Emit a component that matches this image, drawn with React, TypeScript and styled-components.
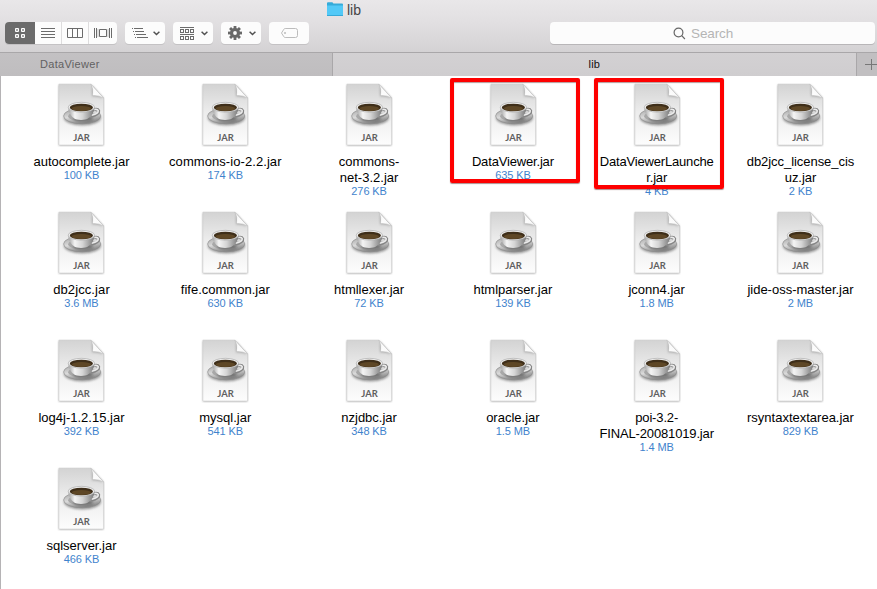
import React from "react";
import styled, { createGlobalStyle } from "styled-components";

const GlobalStyle = createGlobalStyle`
  * { box-sizing: border-box; }
  body { margin: 0; background: #fff; overflow: hidden; font-family: "Liberation Sans", Arial, sans-serif; }
  svg { display: block; flex: none; }
`;

const Window = styled.div`
  width: 877px;
  height: 589px;
  display: flex;
  flex-direction: column;
  overflow: hidden;
  background: #fff;
`;

const Header = styled.header`
  flex: none;
  height: 53px;
  border-bottom: 1px solid #a9a7a9;
  background: linear-gradient(#e9e7e9, #e3e1e3 35%, #d4d2d4);
`;

const Title = styled.div`
  height: 22px;
  padding: 1px 0 0 327px;
  display: flex;
  align-items: flex-start;
  gap: 4px;
  font-size: 14px;
  line-height: 18px;
  color: #464446;
`;

const Toolbar = styled.div`
  display: flex;
  gap: 8px;
  padding-left: 5px;
`;

const Group = styled.div`
  display: flex;
  width: 112px;
  height: 22px;
  border-radius: 4px;
  overflow: hidden;
  background: #fcfcfc;
  box-shadow: 0 1px 0 #c4c2c4;
`;

const Segment = styled.div<{ $width: number; $active?: boolean }>`
  width: ${(p) => p.$width}px;
  display: flex;
  align-items: center;
  justify-content: center;
  background: ${(p) => (p.$active ? "#6b6b6b" : "transparent")};
  border-right: ${(p) => (p.$active ? "0" : "1px solid #dddcdd")};
  &:last-child { border-right: 0; }
`;

const ToolButton = styled.div`
  width: 40px;
  height: 22px;
  border-radius: 4px;
  background: #fcfcfc;
  box-shadow: 0 1px 0 #c4c2c4;
`;

const SearchField = styled.div`
  width: 325px;
  height: 22px;
  margin: 0 2px 0 auto;
  border-radius: 4px;
  background: #fcfcfc;
  box-shadow: 0 1px 0 #b8b6b8;
  display: flex;
  align-items: center;
  padding-left: 123px;
  gap: 5px;
  font-size: 13.5px;
  letter-spacing: -0.1px;
  color: #b5b5b5;
`;

const TabBar = styled.nav`
  flex: none;
  height: 23px;
  display: grid;
  grid-template-columns: 333px 524px 20px;
  border-bottom: 1px solid #a9a7a9;
`;

const Tab = styled.div<{ $active?: boolean }>`
  border-right: 1px solid #a9a7a9;
  padding-left: ${(p) => (p.$active ? 255.5 : 40)}px;
  font-size: 11px;
  line-height: 23px;
  letter-spacing: ${(p) => (p.$active ? 0.2 : 0.3)}px;
  color: ${(p) => (p.$active ? "#111" : "#626162")};
  background: ${(p) => (p.$active ? "linear-gradient(#d3d1d3, #cfcdcf)" : "linear-gradient(#c3c1c3, #bfbdbf)")};
`;

const NewTab = styled.div`
  background: #c1bfc1;
  padding: 5px 0 0 8px;
  overflow: hidden;
`;

const Files = styled.main`
  flex: 1;
  min-height: 0;
  border-left: 1px solid #b5b3b5;
  padding: 2px 0 0 8.6px;
  display: grid;
  grid-template-columns: repeat(6, 143.8px);
  grid-auto-rows: 128px;
`;

const File = styled.div`
  position: relative;
  display: flex;
  flex-direction: column;
  align-items: center;
  padding-top: 5px;
`;

const FileName = styled.div<{ $tracking: number }>`
  margin-top: 7px;
  font-size: 13px;
  line-height: 16px;
  text-align: center;
  white-space: pre;
  letter-spacing: ${(p) => p.$tracking}px;
  color: #000;
`;

const FileSize = styled.div`
  font-size: 11px;
  line-height: 12px;
  margin-top: -1px;
  letter-spacing: -0.1px;
  color: #3f83cd;
`;

const Highlight = styled.div<{ $left: number; $height: number }>`
  position: absolute;
  left: ${(p) => p.$left}px;
  top: 0;
  width: 130px;
  height: ${(p) => p.$height}px;
  border: 4px solid #fe0000;
  border-radius: 2px;
  box-shadow: 0 1px 1px rgba(70, 0, 0, 0.45), inset 0 1px 1px rgba(70, 0, 0, 0.4);
`;

const Folder = () => (
  <svg width="16" height="15" viewBox="0 0 16 15">
    <path d="M0 2.2Q0 1.2 1 1.2h4.4l1 1.4H15q1 0 1 1V6H0z" fill="#35abd9" />
    <path d="M0 4.4h16V14q0 1-.8 1H.8Q0 15 0 14z" fill="#52c9f7" />
    <path d="M0 14.5h16" stroke="#36a9d8" />
  </svg>
);

const GridIcon = () => (
  <svg width="10" height="10" viewBox="0 0 10 10" fill="none" stroke="#fff" strokeWidth="1.2">
    {[0.6, 6.6].map((y) => [0.6, 6.6].map((x) => <rect key={`${x}${y}`} x={x} y={y} width="2.8" height="2.8" rx=".4" />))}
  </svg>
);

const ListIcon = () => (
  <svg width="14" height="10" viewBox="0 0 14 10" stroke="#6b6b6b">
    <path d="M0 .5h14M0 3.5h14M0 6.5h14M0 9.5h14" />
  </svg>
);

const ColumnsIcon = () => (
  <svg width="16" height="10" viewBox="0 0 16 10" fill="none" stroke="#6b6b6b">
    <path d="M.5.5h15v9H.5zM5.5.5v9M10.5.5v9" />
  </svg>
);

const CoverIcon = () => (
  <svg width="18" height="10" viewBox="0 0 18 10" fill="none" stroke="#6b6b6b">
    <path d="M.5 0v10M2.5 0v10M15.5 0v10M17.5 0v10M5.5 1.5h7v7h-7z" />
    <path d="M4 1v8M14 1v8" strokeWidth=".4" />
  </svg>
);

const chevron = <path d="M28.6 9.8l2.9 2.7 2.9-2.7" fill="none" stroke="#505050" strokeWidth="1.5" />;

const ArrangeIcon = () => (
  <svg width="40" height="22" viewBox="0 0 40 22" stroke="#6b6b6b">
    <path d="M7 6.5h1M9 6.5h9M8 9.5h1M10 9.5h9M9 12.5h1M11 12.5h10M10 15.5h1M12 15.5h11" />
    {chevron}
  </svg>
);

const GroupIcon = () => (
  <svg width="40" height="22" viewBox="0 0 40 22" fill="none" stroke="#6b6b6b">
    <path d="M7 5.5h14M7 12.5h14" />
    {[7.5, 14.5].map((y) => [7.5, 12.5, 17.5].map((x) => <rect key={`${x}-${y}`} x={x} y={y} width="3" height="3" />))}
    {chevron}
  </svg>
);

const GearIcon = () => (
  <svg width="40" height="22" viewBox="0 0 40 22">
    <g transform="translate(14 11)">
      {[0, 45, 90, 135].map((a) => (
        <path key={a} d="M-1.4-7h2.8V7h-2.8z" fill="#686868" transform={`rotate(${a})`} />
      ))}
      <circle r="5.1" fill="#686868" />
      <circle r="1.9" fill="#fcfcfc" />
    </g>
    {chevron}
  </svg>
);

const TagIcon = () => (
  <svg width="40" height="22" viewBox="0 0 40 22" fill="none" stroke="#bcbcbc">
    <path d="M16.2 6.5h10.3q2 0 2 2v5q0 2-2 2H16.2q-.8 0-1.3-.7L12.5 11l2.4-3.8q.5-.7 1.3-.7z" />
    <circle cx="16" cy="11" r=".7" />
  </svg>
);

const JarIcon = () => (
  <svg width="48" height="64" viewBox="-0.4 0 48 64">
    <defs>
      <linearGradient id="paper" x1="0" y1="0" x2="0" y2="1">
        <stop offset="0" stopColor="#d3d3d3" /><stop offset=".45" stopColor="#ececec" /><stop offset="1" stopColor="#fdfdfd" />
      </linearGradient>
      <linearGradient id="cup" x1="0" y1="0" x2="1" y2="0">
        <stop offset="0" stopColor="#a0a0a0" /><stop offset=".25" stopColor="#f4f4f4" /><stop offset=".55" stopColor="#d4d4d4" /><stop offset="1" stopColor="#777" />
      </linearGradient>
      <linearGradient id="saucer" x1="0" y1="0" x2=".4" y2="1">
        <stop offset="0" stopColor="#a0a0a0" /><stop offset=".55" stopColor="#dadada" /><stop offset="1" stopColor="#8c8c8c" />
      </linearGradient>
      <linearGradient id="fold" x1="0" y1="1" x2="1" y2="0">
        <stop offset="0" stopColor="#fff" /><stop offset=".5" stopColor="#fafafa" /><stop offset="1" stopColor="#c8c8c8" />
      </linearGradient>
      <filter id="soft" x="-20%" y="-20%" width="140%" height="150%"><feGaussianBlur stdDeviation=".8" /></filter>
    </defs>
    <path d="M1.5 2H34l12 13v47.5H1.5z" fill="#777" opacity=".6" filter="url(#soft)" />
    <path d="M1.5 1.2H33.5L46.2 15V62H1.5z" fill="url(#paper)" stroke="#c6c6c6" strokeWidth=".5" />
    <path d="M34.5 3v10.5q5-.5 11 2z" fill="#777" opacity=".4" filter="url(#soft)" />
    <path d="M33.5 1.2L46.2 15q-4.5-3-11-2.4Q36.3 5 33.5 1.2z" fill="url(#fold)" stroke="#b0b0b0" strokeWidth=".4" />
    <g transform="translate(-.2 1.2)">
      <ellipse cx="25.2" cy="33.6" rx="18.6" ry="7.6" fill="#444" opacity=".5" filter="url(#soft)" />
      <ellipse cx="25" cy="31.8" rx="18.6" ry="7.8" fill="url(#saucer)" stroke="#8c8c8c" strokeWidth=".6" />
      <ellipse cx="24.6" cy="32" rx="13.6" ry="5.2" fill="#a8a8a8" />
      <ellipse cx="26" cy="34.6" rx="10" ry="3" fill="#555" opacity=".6" filter="url(#soft)" />
      <path d="M35.5 25.6q5-1.6 6.1.9.9 3.6-7.6 5.6" fill="none" stroke="#858585" strokeWidth="2.8" />
      <path d="M36 25.5q4.2-1.2 5 .9.6 2.9-6.6 4.7" fill="none" stroke="#ececec" strokeWidth="1.6" />
      <path d="M11 23c.3 5.6 3.6 11 8.6 12.3 2.2.5 6.3.5 8.5 0 5.1-1.3 8.9-6.7 9.3-12.3z" fill="url(#cup)" />
      <ellipse cx="24.2" cy="23" rx="13.2" ry="4.9" fill="#f0f0f0" stroke="#a3a3a3" strokeWidth=".6" />
      <ellipse cx="24.2" cy="23.3" rx="11.6" ry="3.8" fill="#3f2f1a" />
      <ellipse cx="24.2" cy="24.2" rx="9.6" ry="2.5" fill="#5e4726" />
    </g>
    <text x="24.2" y="57.6" textAnchor="middle" fontFamily="Lato, sans-serif" fontWeight="700" fontSize="9.4" letterSpacing=".1" fill="#606060">JAR</text>
  </svg>
);

interface Item { name: string; size: string; tracking?: number; mark?: { left: number; height: number } }

const files: Item[] = [
  { name: "autocomplete.jar", size: "100 KB" },
  { name: "commons-io-2.2.jar", size: "174 KB", tracking: 0.07 },
  { name: "commons-\nnet-3.2.jar", size: "276 KB" },
  { name: "DataViewer.jar", size: "635 KB", tracking: -0.17, mark: { left: 9, height: 105 } },
  { name: "DataViewerLaunche\nr.jar", size: "4 KB", tracking: -0.18, mark: { left: 9.2, height: 111 } },
  { name: "db2jcc_license_cis\nuz.jar", size: "2 KB", tracking: -0.05 },
  { name: "db2jcc.jar", size: "3.6 MB", tracking: 0.1 },
  { name: "fife.common.jar", size: "630 KB" },
  { name: "htmllexer.jar", size: "72 KB" },
  { name: "htmlparser.jar", size: "139 KB" },
  { name: "jconn4.jar", size: "1.8 MB" },
  { name: "jide-oss-master.jar", size: "2 MB" },
  { name: "log4j-1.2.15.jar", size: "392 KB" },
  { name: "mysql.jar", size: "541 KB" },
  { name: "nzjdbc.jar", size: "348 KB" },
  { name: "oracle.jar", size: "1.5 MB" },
  { name: "poi-3.2-\nFINAL-20081019.jar", size: "1.4 MB", tracking: -0.15 },
  { name: "rsyntaxtextarea.jar", size: "829 KB" },
  { name: "sqlserver.jar", size: "466 KB" },
];

export default function App() {
  return (
    <>
      <GlobalStyle />
      <Window>
        <Header>
          <Title><Folder />lib</Title>
          <Toolbar>
            <Group>
              <Segment $width={30} $active><GridIcon /></Segment>
              <Segment $width={27}><ListIcon /></Segment>
              <Segment $width={27}><ColumnsIcon /></Segment>
              <Segment $width={28}><CoverIcon /></Segment>
            </Group>
            <ToolButton><ArrangeIcon /></ToolButton>
            <ToolButton><GroupIcon /></ToolButton>
            <ToolButton><GearIcon /></ToolButton>
            <ToolButton><TagIcon /></ToolButton>
            <SearchField>
              <svg width="13" height="13" viewBox="0 0 13 13" fill="none" stroke="#666" strokeWidth="1.2">
                <circle cx="5.5" cy="5.5" r="4.4" /><path d="M8.7 8.7l3.2 3.3" />
              </svg>
              Search
            </SearchField>
          </Toolbar>
        </Header>
        <TabBar>
          <Tab>DataViewer</Tab>
          <Tab $active>lib</Tab>
          <NewTab><svg width="12" height="12" viewBox="0 0 12 12" stroke="#777"><path d="M0 6.5h12M6.5 1v11" /></svg></NewTab>
        </TabBar>
        <Files>
          {files.map((f) => (
            <File key={f.name}>
              <JarIcon />
              <FileName $tracking={f.tracking ?? 0}>{f.name}</FileName>
              <FileSize>{f.size}</FileSize>
              {f.mark && <Highlight $left={f.mark.left} $height={f.mark.height} />}
            </File>
          ))}
        </Files>
      </Window>
    </>
  );
}
